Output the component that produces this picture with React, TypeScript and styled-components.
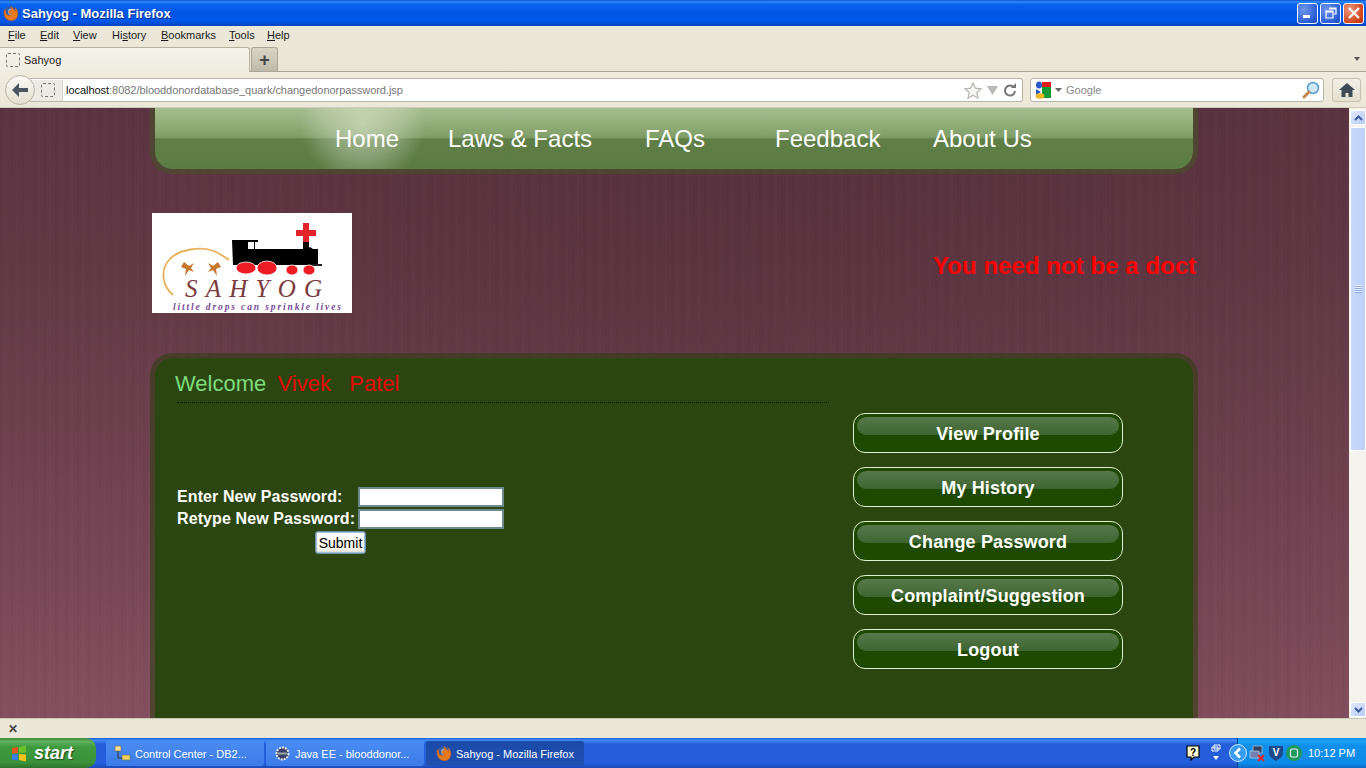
import React from 'react';
import styled, { createGlobalStyle } from 'styled-components';

const Global = createGlobalStyle`
  html, body { margin: 0; padding: 0; height: 100%; overflow: hidden; }
  body { font-family: "Liberation Sans", Arial, sans-serif; }
`;

const Screen = styled.div`
  width: 1366px; height: 768px; display: flex; flex-direction: column; overflow: hidden; background: #ebe8d9;
`;
const TitleBar = styled.div`
  height: 26px; flex: none; display: flex; align-items: center; padding: 0 2px 0 2px; gap: 2px; box-sizing: border-box;
  background: linear-gradient(180deg, #0a4fd0 0%, #2f8cf5 7%, #0a64ee 16%, #0056e4 50%, #0058ea 80%, #0044bf 100%);
`;
const TitleText = styled.span`
  flex: 1; padding-left: 1px; color: #fff; font: bold 13px "Liberation Sans", sans-serif; text-shadow: 1px 1px 0 #0a2f8a;
`;
const WinBtn = styled.div<{ $c?: boolean }>`
  width: 21px; height: 21px; box-sizing: border-box; border: 1px solid #fff; border-radius: 3px; display: flex; align-items: center; justify-content: center;
  background: ${p => p.$c ? 'radial-gradient(circle at 30% 30%, #ec9a7c, #d2431c 70%, #b8330f)' : 'radial-gradient(circle at 30% 30%, #6f96ea, #2a5ed6 70%, #1c45b8)'};
`;
const MenuBar = styled.div`
  height: 20px; flex: none; display: flex; align-items: center; padding: 0 0 2px 8px; box-sizing: border-box; font: 11px "Liberation Sans", sans-serif; color: #1a1a1a; background: #ebe8d9;
`;
const MenuItem = styled.span<{ $w: number }>`
  width: ${p => p.$w}px; u { text-decoration: underline; }
`;
const TabStrip = styled.div`
  height: 26px; flex: none; box-sizing: border-box; display: flex; align-items: flex-end; background: linear-gradient(180deg, #ebe8d9, #e8e5d5); border-bottom: 1px solid #a9a698; position: relative;
`;
const Tab = styled.div`
  width: 250px; height: 25px; box-sizing: border-box; background: linear-gradient(180deg,#f6f4ea,#efece0); border: 1px solid #b5b2a3; border-bottom: 0; border-left: 0; border-radius: 0 3px 0 0; display: flex; align-items: center; gap: 4px; padding: 0 0 0 6px; font: 11px "Liberation Sans", sans-serif; color: #222;
  margin-bottom: -1px;
`;
const DashedIcon = styled.span<{ $s?: number }>`
  width: ${p => p.$s ?? 12}px; height: ${p => p.$s ?? 12}px; box-sizing: border-box; border: 1px dashed #777; border-radius: 2px; display: inline-block; flex: none;
`;
const NewTab = styled.div`
  width: 27px; height: 24px; margin-left: 1px; box-sizing: border-box; border: 1px solid #a9a698; border-bottom: 0; border-radius: 3px 3px 0 0; background: linear-gradient(180deg,#d9d6c6,#bdbaaa); display: flex; align-items: center; justify-content: center; color: #444; font: bold 18px "Liberation Sans"; line-height: 1;
`;
const TabArrow = styled.span`
  position: absolute; right: 6px; top: 11px; width: 0; height: 0; border-left: 3px solid transparent; border-right: 3px solid transparent; border-top: 4px solid #555;
`;
const NavBar = styled.div`
  height: 36px; flex: none; display: flex; align-items: center; padding-left: 5px; background: linear-gradient(180deg,#efecdf,#ebe8d9); border-bottom: 1px solid #cfccb9; box-sizing: border-box;
`;
const BackBtn = styled.div`
  width: 30px; height: 30px; box-sizing: border-box; border-radius: 50%; background: linear-gradient(180deg,#fbfaf5,#e2dfd0); border: 1px solid #b9b6a6; display: flex; align-items: center; justify-content: center; z-index: 1; flex: none;
`;
const UrlBox = styled.div`
  width: 993px; height: 24px; margin-left: -5px; box-sizing: border-box; border: 1px solid #b9b6a6; border-left: 0; border-radius: 0 3px 3px 0; background: #fff; display: flex; align-items: center; padding-top: 1px; font: 11px "Liberation Sans", sans-serif; color: #777;
`;
const Identity = styled.div`
  width: 33px; height: 100%; flex: none; background: #ecebe3; display: flex; align-items: center; padding-left: 11px; box-sizing: border-box; margin-right: 3px; border-right: 1px solid #d7d5c8;
`;
const Host = styled.span` color: #111; `;
const UrlText = styled.span` flex: 1; letter-spacing: -.04px; `;
const UrlIcons = styled.div`
  display: flex; align-items: center; gap: 5px; padding-right: 5px;
`;
const SearchBox = styled.div`
  width: 294px; height: 24px; margin-left: 7px; box-sizing: border-box; border: 1px solid #b9b6a6; border-radius: 3px; background: #fff; display: flex; align-items: center; padding: 1px 3px 0 4px; gap: 4px; font: 11px "Liberation Sans", sans-serif; color: #888;
`;
const SearchText = styled.span` flex: 1; `;
const HomeBtn = styled.div`
  width: 29px; height: 24px; margin-left: 8px; box-sizing: border-box; border: 1px solid #c4c1b1; border-radius: 3px; background: linear-gradient(180deg,#f2f0e6,#e3e0d1); display: flex; align-items: center; justify-content: center;
`;
const Viewport = styled.div`
  flex: 1; min-height: 0; display: flex; overflow: hidden;
`;
const Page = styled.div`
  flex: 1; min-width: 0; overflow: hidden; padding-left: 150px; box-sizing: border-box;
  background:
    linear-gradient(90deg, transparent 12%, rgba(0,0,0,.05) 30%, rgba(0,0,0,.08) 55%, rgba(0,0,0,.05) 80%, rgba(0,0,0,.02) 100%),
    repeating-linear-gradient(90deg, rgba(0,0,0,.025) 0 2px, transparent 2px 5px, rgba(255,255,255,.012) 5px 7px, transparent 7px 11px),
    linear-gradient(180deg, #5c3441 0%, #623845 25%, #6c3f4d 50%, #774656 75%, #84505f 100%);
`;
const Column = styled.div` width: 1048px; `;
const TopNav = styled.nav`
  height: 66px; box-sizing: border-box; border: 5px solid rgba(70,85,40,.55); border-top: 0; border-radius: 0 0 22px 22px; background-clip: padding-box; position: relative; overflow: hidden; display: flex; padding: 0 0 0 180px;
  background-image: linear-gradient(180deg, #a7be90 0%, #8fab76 30%, #7f9d67 48%, #5f7f47 51%, #5b7c44 100%);
`;
const Glow = styled.div`
  position: absolute; left: 145px; top: 0; bottom: 0; width: 126px;
  background: radial-gradient(ellipse 50% 95% at 50% 28%, rgba(225,232,210,.6), rgba(225,232,210,.3) 60%, transparent 100%);
`;
const NavLink = styled.a<{ $w: number }>`
  position: relative; width: ${p => p.$w}px; flex: none; color: #fff; font: 24px/62px "Liberation Sans", sans-serif; white-space: nowrap;
`;
const HeadRow = styled.div`
  display: flex; justify-content: space-between; align-items: center; padding: 39px 0 40px 2px;
`;
const Logo = styled.svg` display: block; flex: none; `;
const Slogan = styled.div`
  width: 265px; padding-top: 5px; overflow: hidden; white-space: nowrap; color: #f00; font: bold 24px "Liberation Sans", sans-serif; letter-spacing: .05px;
`;
const Panel = styled.main`
  height: 400px; box-sizing: border-box; border: 5px solid rgba(50,62,20,.6); border-radius: 22px 22px 0 0; background-color: #2c4612; background-clip: padding-box; display: flex; padding-left: 20px; color: #fff;
`;
const LeftCol = styled.div` width: 678px; flex: none; `;
const Welcome = styled.h1`
  margin: 0; padding-top: 10px; height: 34px; font: 22px/31px "Liberation Sans", sans-serif; color: #7ddc7d; white-space: pre;
  span { color: #e40a0a; margin-left: -1px; }
`;
const Rule = styled.div`
  margin: 0 0 0 2px; width: 652px; border-top: 1px dotted #0c1a02;
`;
const Form = styled.form`
  margin: 83px 0 0 2px; display: grid; grid-template-columns: 181px 146px; grid-auto-rows: 22px; align-items: center;
`;
const Label = styled.label`
  font: bold 16px "Liberation Sans", sans-serif; white-space: nowrap; color: #fff; letter-spacing: .1px;
`;
const Field = styled.input`
  width: 146px; height: 20px; box-sizing: border-box; border: 2px solid #6f8a8f; background: #fff; padding: 0; margin: 0;
`;
const Submit = styled.button`
  grid-column: 1 / 3; margin: 3px 0 0 138px; width: 51px; height: 23px; padding: 0; box-sizing: border-box; border: 1px solid #6f8fa8; border-radius: 3px; background: linear-gradient(180deg,#fff,#f2f0e6 85%,#d9d6c6); font: 14px "Liberation Sans", sans-serif; color: #000; box-shadow: 0 0 0 1px #9fc0d8 inset;
`;
const SideCol = styled.div`
  display: flex; flex-direction: column; gap: 14px; padding: 55px 0 0 0;
`;
const SideBtn = styled.a`
  position: relative; width: 270px; height: 40px; box-sizing: border-box; border: 1px solid #dff0d0; border-radius: 12px; background: #1f4800; color: #fff; font: bold 18px/40px "Liberation Sans", sans-serif; text-align: center; display: block; overflow: hidden; letter-spacing: .15px;
  span { position: relative; }
  &::before { content: ""; position: absolute; left: 3px; right: 3px; top: 3px; height: 18px; border-radius: 9px; background: linear-gradient(180deg,#58784a,#3d6530); }
`;
const Scroll = styled.div`
  width: 17px; flex: none; box-sizing: border-box; background: #f4f3ec; display: flex; flex-direction: column; padding: 2px 0 1px 1px; gap: 2px;
`;
const ScrollBtn = styled.div`
  width: 16px; height: 15px; flex: none; border: 1px solid #fff; box-sizing: border-box; border-radius: 2px; background: linear-gradient(135deg,#e1eafe,#b6caf5); display: flex; align-items: center; justify-content: center;
`;
const Thumb = styled.div`
  height: 324px; flex: none; border: 1px solid #fff; box-sizing: border-box; border-radius: 2px; background: linear-gradient(90deg,#c9d8fb,#bcd0f8); display: flex; align-items: center; justify-content: center;
  &::after { content: ""; width: 7px; height: 8px; background: repeating-linear-gradient(180deg,#eef3ff 0 1px,#8aa5e0 1px 2px); }
`;
const Spacer = styled.div` flex: 1; `;
const FindBar = styled.div`
  height: 20px; flex: none; box-sizing: border-box; background: #ebe8d9; border-top: 1px solid #c9c6b6; display: flex; align-items: center; padding-left: 8px; color: #444; font: bold 12px "Liberation Sans", sans-serif;
`;
const Taskbar = styled.footer`
  height: 30px; flex: none; display: flex; align-items: stretch;
  background: linear-gradient(180deg,#1f5fd8 0%,#3f8cf3 8%,#245edb 20%,#245edb 85%,#1a49b8 100%);
`;
const Start = styled.div`
  width: 96px; flex: none; box-sizing: border-box; border-radius: 0 10px 10px 0; display: flex; align-items: center; gap: 6px; padding-left: 11px; color: #fff; font: italic bold 18px "Liberation Sans", sans-serif; text-shadow: 1px 1px 1px #1c4a1c;
  background: linear-gradient(180deg,#3d8a3d 0%,#5fb35f 12%,#3f9a3f 30%,#3a933a 80%,#2d752d 100%);
`;
const Tasks = styled.div` flex: 1; display: flex; gap: 2px; padding: 3px 0 2px 10px; `;
const Task = styled.div<{ $on?: boolean }>`
  width: 158px; box-sizing: border-box; border-radius: 2px; display: flex; align-items: center; gap: 4px; padding-left: ${p => p.$on ? 9 : 8}px; color: #fff; font: 11px "Liberation Sans", sans-serif; white-space: nowrap;
  background: ${p => p.$on ? 'linear-gradient(180deg,#1b4aa8,#1f51b3)' : 'linear-gradient(180deg,#4a8cf2,#3b7be8)'};
`;
const Tray = styled.div`
  width: 129px; flex: none; box-sizing: border-box; display: flex; align-items: center; gap: 2px; color: #fff; font: 11px "Liberation Sans", sans-serif; border-left: 1px solid #0f3f95;
  background: linear-gradient(180deg,#0f8df0 0%,#18a4f7 10%,#0f90ec 25%,#0e8ae8 85%,#0b6bc4 100%);
`;
const Clock = styled.span` margin-left: 4px; `;
const QuickArea = styled.div` display: flex; align-items: center; gap: 11px; padding-right: 16px; `;

const Firefox = ({ s = 17 }: { s?: number }) => (
  <svg width={s} height={s} viewBox="0 0 20 20" style={{ flex: 'none' }}>
    <circle cx="10" cy="10" r="8.6" fill="#2f5da8" />
    <circle cx="11" cy="8" r="4" fill="#8fb6e2" />
    <path d="M2.5 6C2 11 3.500 18.500 11 18.500C16.500 18.500 19.500 13.500 18.500 8.500C18 6 16.500 3.800 15 3C16 5 16 6.500 15.500 7.500C14.500 5.500 12.500 4 11 1.500C10.500 3.500 10.800 5 12 6C9.500 5.500 8 6.800 8 8.500C8 10 10 10.500 11.500 10.200C11 11.800 8.500 13 6 11.500C4.500 10.500 4 8 4.500 5.500C3.800 5.800 3 5.800 2.500 6Z" fill="#e8791c" stroke="#c8501a" strokeWidth=".5" />
  </svg>
);

const Logotype = () => (
  <Logo width={200} height={100} viewBox="0 0 200 100">
    <rect width="200" height="100" fill="#fff" />
    <path d="M151 10h6v7h7v6h-7v7h-6v-7h-7v-6h7z" fill="#e3242b" />
    <rect x="151" y="29" width="6" height="8" fill="#000" />
    <path d="M80 27h26v2h-3v7h52l3-2 3 2h5v16H81z" fill="#000" />
    <rect x="96" y="29" width="6" height="7" fill="#fff" />
    <rect x="160" y="51" width="10" height="2" fill="#222" />
    <ellipse cx="94" cy="55" rx="10" ry="6" fill="#ee1c25" stroke="#fff" strokeWidth=".8" />
    <ellipse cx="115" cy="55" rx="10" ry="7" fill="#ee1c25" stroke="#fff" strokeWidth=".8" />
    <ellipse cx="140" cy="57" rx="6" ry="5" fill="#ee1c25" stroke="#fff" strokeWidth=".8" />
    <ellipse cx="157" cy="57" rx="6" ry="5" fill="#ee1c25" stroke="#fff" strokeWidth=".8" />
    <path d="M21 82C9 72 9 56 17 47C26 36 50 33 62 38C68 41 73 44 77 47" fill="none" stroke="#e8b25c" strokeWidth="1.800" />
    <path d="M32 49l5 4 5-3-3 5 3 4-5-2-4 6 1-7-5-2zM66 49l-5 4-5-3 3 5-3 4 5-2 4 6-1-7 5-2z" fill="#c7782e" />
    <text x="33" y="84" fontFamily="'Liberation Serif', serif" fontStyle="italic" fontSize="25" fill="#7b3a3e" textLength="137">SAHYOG</text>
    <text x="21" y="97" fontFamily="'Liberation Serif', serif" fontStyle="italic" fontWeight="bold" fontSize="9.500" fill="#7a4a9a" textLength="168">little drops can sprinkle lives</text>
  </Logo>
);

const tasks = [
  ['Control Center - DB2...', 'db'],
  ['Java EE - blooddonor...', 'gear'],
  ['Sahyog - Mozilla Firefox', 'ff'],
];

export default function App() {
  return (
    <Screen>
      <Global />
      <TitleBar>
        <Firefox />
        <TitleText>Sahyog - Mozilla Firefox</TitleText>
        <WinBtn>
          <svg width="12" height="12" viewBox="0 0 12 12"><rect x="1" y="8" width="7" height="3" fill="#fff" /></svg>
        </WinBtn>
        <WinBtn>
          <svg width="14" height="14" viewBox="0 0 14 14"><path d="M5 2h7v6h-2M2 5h7v7H2z M2 6h7 M5 3h7" fill="none" stroke="#fff" strokeWidth="1.200" /></svg>
        </WinBtn>
        <WinBtn $c>
          <svg width="14" height="14" viewBox="0 0 14 14"><path d="M2 2l10 10M12 2L2 12" stroke="#fff" strokeWidth="2.200" /></svg>
        </WinBtn>
      </TitleBar>
      <MenuBar>
        <MenuItem $w={32}><u>F</u>ile</MenuItem>
        <MenuItem $w={33}><u>E</u>dit</MenuItem>
        <MenuItem $w={39}><u>V</u>iew</MenuItem>
        <MenuItem $w={49}>Hi<u>s</u>tory</MenuItem>
        <MenuItem $w={68}><u>B</u>ookmarks</MenuItem>
        <MenuItem $w={38}><u>T</u>ools</MenuItem>
        <MenuItem $w={40}><u>H</u>elp</MenuItem>
      </MenuBar>
      <TabStrip>
        <Tab><DashedIcon $s={14} />Sahyog</Tab>
        <NewTab>+</NewTab>
        <TabArrow />
      </TabStrip>
      <NavBar>
        <BackBtn>
          <svg width="18" height="16" viewBox="0 0 18 16"><path d="M8 1L1 8l7 7V10h9V6H8z" fill="#4a5560" /></svg>
        </BackBtn>
        <UrlBox>
          <Identity><DashedIcon $s={14} /></Identity>
          <UrlText><Host>localhost</Host>:8082/blooddonordatabase_quark/changedonorpassword.jsp</UrlText>
          <UrlIcons>
            <svg width="18" height="17" viewBox="0 0 18 17"><path d="M9 1l2.400 5.200 5.600.6-4.200 3.800 1.200 5.600L9 13.300 4 16.200l1.200-5.600L1 6.800l5.600-.6z" fill="#f6f6f4" stroke="#b4b4b0" strokeWidth="1.200" /></svg>
            <svg width="11" height="9" viewBox="0 0 11 9"><path d="M0 0h11L5.500 9z" fill="#b8b8b4" /></svg>
            <svg width="14" height="14" viewBox="0 0 14 14"><path d="M11 4.500A5 5 0 1 0 12 8" fill="none" stroke="#777" strokeWidth="2" /><path d="M8 5h5V0z" fill="#777" /></svg>
          </UrlIcons>
        </UrlBox>
        <SearchBox>
          <svg width="16" height="18" viewBox="0 0 16 18" style={{ flex: 'none' }}>
            <rect x="7" y="1" width="9" height="6" fill="#e21b1b" /><rect x="7" y="6" width="9" height="11" fill="#139a34" />
            <ellipse cx="4" cy="4" rx="3" ry="3.500" fill="#2a57c9" /><path d="M1 8l5 3-5 3z" fill="#2a57c9" /><ellipse cx="5" cy="15" rx="4.500" ry="2.800" fill="#f0b820" />
          </svg>
          <svg width="7" height="4" viewBox="0 0 7 4" style={{ flex: 'none' }}><path d="M0 0h7L3.500 4z" fill="#666" /></svg>
          <SearchText>Google</SearchText>
          <svg width="18" height="18" viewBox="0 0 18 18"><circle cx="11" cy="7" r="5.500" fill="#cfe8f8" stroke="#5a9ac8" strokeWidth="1.500" /><path d="M7 11l-5 5" stroke="#c08a4a" strokeWidth="3" strokeLinecap="round" /></svg>
        </SearchBox>
        <HomeBtn>
          <svg width="16" height="14" viewBox="0 0 16 14"><path d="M8 0L0 7h2.500v7h4v-4h3v4h4V7H16z" fill="#3e4a55" /></svg>
        </HomeBtn>
      </NavBar>
      <Viewport>
        <Page>
          <Column>
            <TopNav>
              <Glow />
              <NavLink $w={113}>Home</NavLink>
              <NavLink $w={197}>Laws &amp; Facts</NavLink>
              <NavLink $w={130}>FAQs</NavLink>
              <NavLink $w={158}>Feedback</NavLink>
              <NavLink $w={120}>About Us</NavLink>
            </TopNav>
            <HeadRow>
              <Logotype />
              <Slogan>You need not be a doct</Slogan>
            </HeadRow>
            <Panel>
              <LeftCol>
                <Welcome>Welcome  <span>Vivek   Patel</span></Welcome>
                <Rule />
                <Form>
                  <Label>Enter New Password:</Label><Field />
                  <Label>Retype New Password:</Label><Field />
                  <Submit type="button">Submit</Submit>
                </Form>
              </LeftCol>
              <SideCol>
                {['View Profile', 'My History', 'Change Password', 'Complaint/Suggestion', 'Logout'].map(t => (
                  <SideBtn key={t}><span>{t}</span></SideBtn>
                ))}
              </SideCol>
            </Panel>
          </Column>
        </Page>
        <Scroll>
          <ScrollBtn><svg width="9" height="6" viewBox="0 0 9 6"><path d="M1 5l3.500-3.500L8 5" fill="none" stroke="#3d5a9c" strokeWidth="2" /></svg></ScrollBtn>
          <Thumb />
          <Spacer />
          <ScrollBtn><svg width="9" height="6" viewBox="0 0 9 6"><path d="M1 1l3.500 3.500L8 1" fill="none" stroke="#3d5a9c" strokeWidth="2" /></svg></ScrollBtn>
        </Scroll>
      </Viewport>
      <FindBar>✕</FindBar>
      <Taskbar>
        <Start>
          <svg width="17" height="17" viewBox="0 0 17 17"><path d="M1 3l6-1v6l-6 .5z" fill="#e8541e" /><path d="M8 2l7-1.500v7L8 8z" fill="#6cc02c" /><path d="M1 9.500l6-.5v6.500l-6-1z" fill="#3a7be8" /><path d="M8 9l7 .5v7l-7-1.500z" fill="#f2c318" /></svg>
          start
        </Start>
        <Tasks>
          {tasks.map(([t, k]) => (
            <Task key={t} $on={k === 'ff'}>
              {k === 'db' && <svg width="17" height="17" viewBox="0 0 17 17"><rect x="1" y="1" width="6" height="5" fill="#f4e08a" stroke="#666" strokeWidth=".6" /><path d="M4 6v7h4" stroke="#333" fill="none" /><rect x="8" y="10" width="8" height="5" fill="#f4d05a" stroke="#666" strokeWidth=".6" /></svg>}
              {k === 'gear' && <svg width="17" height="17" viewBox="0 0 17 17"><circle cx="8.500" cy="8.500" r="6" fill="#3a3f66" stroke="#e8e8e8" strokeWidth="2" strokeDasharray="2 1" /><rect x="4" y="7.500" width="9" height="2" fill="#9aa" /></svg>}
              {k === 'ff' && <Firefox />}
              {t}
            </Task>
          ))}
        </Tasks>
        <QuickArea>
          <svg width="14" height="16" viewBox="0 0 14 16"><path d="M1 1h12v11H8l-3 3v-3H1z" fill="#fff8d0" stroke="#000" strokeWidth="1.200" /><text x="7" y="10.500" textAnchor="middle" fontSize="10" fontWeight="bold" fontFamily="Liberation Sans" fill="#000">?</text></svg>
          <svg width="10" height="18" viewBox="0 0 10 18"><path d="M3 1h6v4H3zM1 3h6v4H1z" fill="none" stroke="#fff" /><path d="M2 12h6l-3 4z" fill="#fff" /></svg>
        </QuickArea>
        <Tray>
          <svg width="18" height="18" viewBox="0 0 18 18" style={{ marginLeft: -9, flex: 'none' }}><circle cx="9" cy="9" r="8.500" fill="#3a9cf0" stroke="#cfe8fb" /><path d="M11 4.500L6.500 9l4.500 4.500" fill="none" stroke="#fff" strokeWidth="2.500" /></svg>
          <svg width="17" height="17" viewBox="0 0 17 17" style={{ flex: 'none' }}><rect x="4" y="1" width="9" height="7" fill="#304060" stroke="#cdd" strokeWidth=".6" /><rect x="1" y="6" width="9" height="7" fill="#7080b0" stroke="#cdd" strokeWidth=".6" /><path d="M9 10l6 6M15 10l-6 6" stroke="#e22" strokeWidth="1.800" /></svg>
          <svg width="16" height="17" viewBox="0 0 16 17" style={{ flex: 'none' }}><path d="M1 1h14v7c0 4-4 6-7 8-3-2-7-4-7-8z" fill="#1c4b8c" /><text x="8" y="11" textAnchor="middle" fontSize="10" fontWeight="bold" fontFamily="Liberation Sans" fill="#fff">V</text></svg>
          <svg width="16" height="16" viewBox="0 0 16 16" style={{ flex: 'none' }}><circle cx="8" cy="8" r="8" fill="#1e9a5c" /><rect x="4.500" y="4" width="7" height="8" rx="1.500" fill="none" stroke="#eef" strokeWidth="1.200" /></svg>
          <Clock>10:12 PM</Clock>
        </Tray>
      </Taskbar>
    </Screen>
  );
}
